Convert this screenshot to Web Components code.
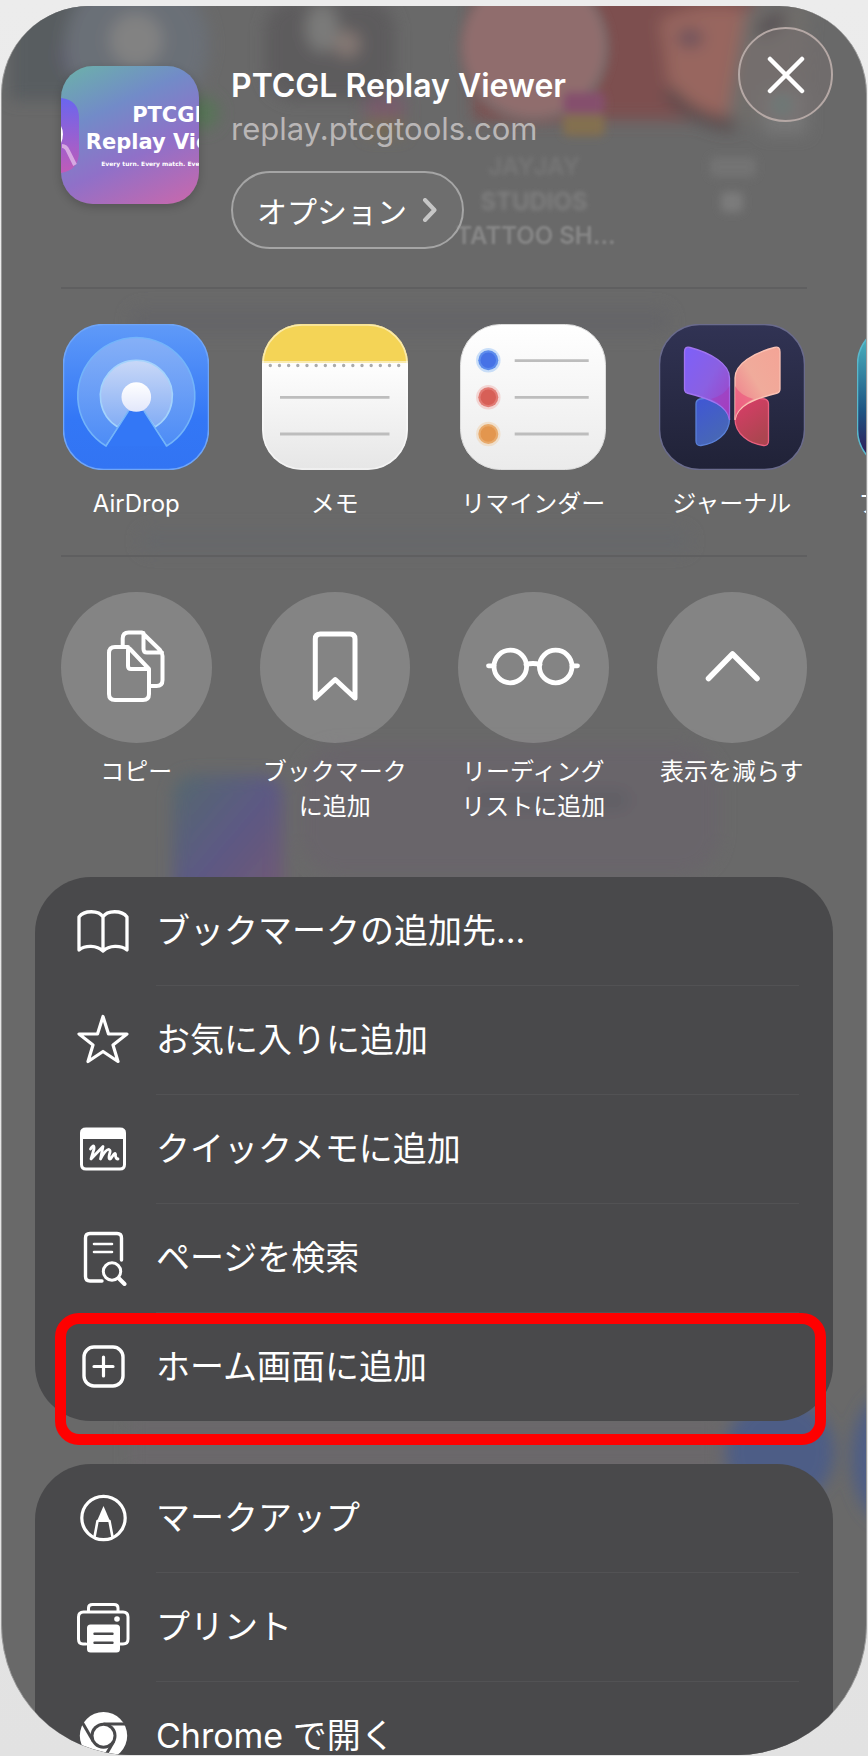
<!DOCTYPE html>
<html lang="ja">
<head>
<meta charset="UTF-8">
<meta name="viewport" content="width=device-width, initial-scale=1">
<title>PTCGL Replay Viewer</title>
<style>
    body {
        margin: 0;
        height: 100vh;
        overflow: hidden;
        background: linear-gradient(#ececec, #e2e2e2);
        color: #fff;
        font-family: Inter, "Noto Sans CJK JP", sans-serif;
    }
</style>
</head>
<body>
<share-sheet>
    <sheet-header slot="header" name="PTCGL Replay Viewer" site="replay.ptcgtools.com"></sheet-header>

    <tile-row slot="apps">
        <app-tile icon="airdrop">AirDrop</app-tile>
        <app-tile icon="notes">メモ</app-tile>
        <app-tile icon="reminders">リマインダー</app-tile>
        <app-tile icon="journal">ジャーナル</app-tile>
        <app-tile icon="board">フリーボード</app-tile>
    </tile-row>

    <tile-row slot="actions">
        <round-action icon="copy">コピー</round-action>
        <round-action icon="bookmark">ブックマーク<br>に追加</round-action>
        <round-action icon="glasses">リーディング<br>リストに追加</round-action>
        <round-action icon="up">表示を減らす</round-action>
    </tile-row>

    <menu-card>
        <menu-row icon="book">ブックマークの追加先...</menu-row>
        <menu-row icon="star">お気に入りに追加</menu-row>
        <menu-row icon="memo">クイックメモに追加</menu-row>
        <menu-row icon="find">ページを検索</menu-row>
        <menu-row icon="plus" marked>ホーム画面に追加</menu-row>
    </menu-card>
    <menu-card>
        <menu-row icon="markup">マークアップ</menu-row>
        <menu-row icon="print">プリント</menu-row>
        <menu-row icon="chrome">Chrome で開く</menu-row>
    </menu-card>
</share-sheet>

<script>
// 146 x 146 app icons
const APP_ICONS = {
    airdrop: `
        <defs>
            <linearGradient id="bg" x2="0" y2="1"><stop stop-color="#5f9af8"/><stop offset=".65" stop-color="#3377f6"/><stop offset="1" stop-color="#3274f3"/></linearGradient>
            <linearGradient id="o" x2="0" y2="1"><stop stop-color="#86b0f7"/><stop offset="1" stop-color="#4d8cf6"/></linearGradient>
            <linearGradient id="m" x2="0" y2="1"><stop stop-color="#c9d8f7"/><stop offset="1" stop-color="#83adf5"/></linearGradient>
            <linearGradient id="d" x2="0" y2="1"><stop stop-color="#fff"/><stop offset="1" stop-color="#e2e7fb"/></linearGradient>
        </defs>
        <rect x=".5" y=".5" width="145" height="145" rx="40" fill="url(#bg)" stroke="#6fa5f8" stroke-width="1.5"/>
        <path d="M43 122A58.5 58.5 0 1 1 103.6 122L81 88H65.5Z" fill="url(#o)" stroke="#73b4fa" stroke-width="1.6" stroke-linejoin="round"/>
        <path d="M54.7 103A36 36 0 1 1 92 103L81 88H65.5Z" fill="url(#m)" stroke="#a4d3fc" stroke-width="1.6" stroke-linejoin="round"/>
        <path d="M43.5 122L65.5 87H81L103 122Z" fill="#3377f6"/>
        <path d="M43 122L65.5 87M103.6 122L81 87" stroke="#73b4fa" stroke-width="1.4"/>
        <circle cx="73.3" cy="73" r="14.8" fill="url(#d)"/>`,
    notes: `
        <defs>
            <linearGradient id="bg" x2="0" y2="1"><stop offset=".3" stop-color="#fdfdfd"/><stop offset="1" stop-color="#e6e6e6"/></linearGradient>
            <clipPath id="c"><rect width="146" height="146" rx="40"/></clipPath>
        </defs>
        <g clip-path="url(#c)">
            <rect width="146" height="146" fill="url(#bg)"/>
            <rect width="146" height="37" fill="#f4d456"/>
            <path d="M0 38H146" stroke="#f9ebb0" stroke-width="2"/>
        </g>
        <rect x="1" y="1" width="144" height="144" rx="39" fill="none" stroke="#fff" stroke-opacity=".5" stroke-width="1.5"/>
        <path d="M8.3 41.5H138" stroke="#aaa" stroke-width="3.4" stroke-linecap="round" stroke-dasharray="0 9.17"/>
        <path d="M18 73.3H127.5M18 110H127.5" stroke="#bdbdbd" stroke-width="2.8"/>`,
    reminders: `
        <defs><linearGradient id="bg" x2="0" y2="1"><stop stop-color="#fff"/><stop offset="1" stop-color="#ebebeb"/></linearGradient></defs>
        <rect x=".5" y=".5" width="145" height="145" rx="40" fill="url(#bg)" stroke="#ddd" stroke-width="1"/>
        <g stroke-opacity=".4" stroke-width="4.5">
            <circle cx="28.3" cy="36.3" r="10" fill="#4672e6" stroke="#7fb4f5"/>
            <circle cx="28.3" cy="73.3" r="10" fill="#d75f57" stroke="#f0a5a0"/>
            <circle cx="28.3" cy="110" r="10" fill="#e3964e" stroke="#f0c898"/>
        </g>
        <path d="M54.7 36.6H128.7M54.7 73.3H128.7M54.7 110H128.7" stroke="#bdbdbd" stroke-width="2.8"/>`,
    journal: `
        <defs>
            <linearGradient id="bg" x2="0" y2="1"><stop stop-color="#313354"/><stop offset="1" stop-color="#202237"/></linearGradient>
            <linearGradient id="a" x2="1" y2="1"><stop stop-color="#7d60fa"/><stop offset=".5" stop-color="#8a60e2"/><stop offset="1" stop-color="#a23fc0"/></linearGradient>
            <linearGradient id="b" x2=".5" y2="1"><stop stop-color="#3f56d6"/><stop offset="1" stop-color="#4868b4"/></linearGradient>
            <linearGradient id="e" x1="1" x2="0" y2="1"><stop stop-color="#f4a496"/><stop offset=".5" stop-color="#f0ab9b"/><stop offset="1" stop-color="#ee7088"/></linearGradient>
            <linearGradient id="f" x2=".5" y2="1"><stop stop-color="#dd3c6a"/><stop offset="1" stop-color="#ac4550"/></linearGradient>
        </defs>
        <rect x=".5" y=".5" width="145" height="145" rx="40" fill="url(#bg)" stroke="#6a6b8c" stroke-width="1.5"/>
        <path d="M37 80Q37 76 41 75L49 74C60 76 70.5 84 70.5 95C70.5 110 56 120 42 121.500Q37 122 37 117Z" fill="url(#b)" stroke="#5a80d8" stroke-width="1.3"/>
        <path d="M25.5 28Q25.5 22 31 23.5C52 29 70.5 40 70.5 54V96C69 82 52 75 28 69Q25.5 68 25.5 65Z" fill="url(#a)" stroke="#a174f0" stroke-width="1.3"/>
        <path d="M52 75Q66 71 70.5 62V96C69 87 62 79 52 75Z" fill="#a838b8" opacity=".5"/>
        <path d="M109.5 80Q109.5 76 105.5 75L97.5 74C86.5 76 76 84 76 95C76 110 90.5 120 104.5 121.5Q109.5 122 109.5 117Z" fill="url(#f)" stroke="#ea6080" stroke-width="1.3"/>
        <path d="M121 28Q121 22 115.5 23.5C94.5 29 76 40 76 54V96C77.5 82 94.5 75 118.5 69Q121 68 121 65Z" fill="url(#e)" stroke="#fbc2b4" stroke-width="1.3"/>
        <path d="M94.5 75Q80.5 71 76 62V96C77.5 87 84.5 79 94.5 75Z" fill="#ec4478" opacity=".5"/>`,
    board: `
        <defs><linearGradient id="bg" x2="0" y2="1"><stop offset=".1" stop-color="#48afbd"/><stop offset=".6" stop-color="#1d5482"/><stop offset="1" stop-color="#35094a"/></linearGradient></defs>
        <rect x=".5" y=".5" width="145" height="145" rx="40" fill="url(#bg)" stroke="#59b8cc" stroke-width="1.5"/>`
};

// 96 x 96 line icons inside the round buttons
const ACTION_ICONS = {
    copy: `<g stroke-width="4"><path d="M40 28H27Q21 28 21 34V75Q21 81 27 81H55Q61 81 61 75V50L42 30Q40 28 40 31V47Q40 50 43 50H61"/>
        <path d="M34.7 27V19.5Q34.7 13.5 40.7 13.5H54L72 31Q74.5 34 74.5 37V61Q74.5 67 68.5 67H63M55.5 14V30Q55.5 33.5 59 33.5H74"/></g>`,
    bookmark: `<path stroke-width="5" d="M28.3 79V20Q28.3 15 33.3 15H63Q68 15 68 20V79L48.2 60.5Z"/>`,
    glasses: `<g stroke-width="4.8"><circle cx="25.3" cy="47.5" r="16.3"/><circle cx="70.7" cy="47.5" r="16.3"/><path d="M41 45.5Q48 43.5 55 45.5M3.5 46.8H9M87 46.8H92.5"/></g>`,
    up: `<path stroke-width="5.5" d="M24.5 59.5L48.5 35L73 59.5"/>`
};

// 56 x 56 menu icons
const MENU_ICONS = {
    book: `<path stroke-width="3.3" d="M28 14C24 7 9 7 4 14V47C10 42 22 42 28 48C34 42 46 42 52 47V14C47 7 32 7 28 14V48"/>`,
    star: `<path stroke-width="3.2" d="M28 4.5L33.5 22H52L38 33L43 49.5L28 39.5L13 49.5L18 33L4 22H22.5Z"/>`,
    memo: `<path stroke-width="3" d="M6.5 12Q6.5 8 11 8H45Q49.5 8 49.5 12V43.5Q49.5 48 45 48H11Q6.5 48 6.5 43.5Z"/>
        <path fill="#fff" stroke="none" d="M6 13Q6 7 12 7H44Q50 7 50 13V18H6Z"/>
        <path stroke-width="2.8" d="M15.5 28Q19.500 22 19 28L16 38L28 25.500L25.500 38Q31 28 34 28.500Q36 29 34.500 33Q33 38.500 35.500 38L39 33Q41 31.500 40.500 35Q41 38 43 38"/>`,
    find: `<path stroke-width="3.4" d="M27 51H15Q10.5 51 10.5 46.5V8Q10.5 3.5 15 3.5H42Q46.5 3.5 46.5 8V30"/>
        <path stroke-width="2.6" d="M19 14H37M19 22H37"/><circle cx="37" cy="41.5" r="8.7" stroke-width="3"/><path stroke-width="4" d="M44 48.5L49.5 54"/>`,
    plus: `<rect x="9" y="8" width="39" height="39" rx="10" stroke-width="3.4"/><path stroke-width="3.2" d="M19 27.5H38M28.5 18V37"/>`,
    markup: `<circle cx="28.5" cy="28" r="21.7" stroke-width="3.2"/><path stroke="none" fill="#fff" d="M28.5 16L35 31V32H22V31Z"/>
        <path stroke-width="2.6" d="M22.5 31L19.5 47M34.5 31L37.5 47"/>`,
    print: `<path stroke-width="3" d="M11 45H8Q3.5 45 3.5 40V18Q3.5 13 8.5 13H48Q53 13 53 18V40Q53 45 48 45H45M13.5 12V9Q13.5 5.5 17.5 5.5H39Q43 5.5 43 9V12"/>
        <rect x="12" y="25.5" width="33" height="28" rx="3.5" fill="#fff" stroke="none"/><circle cx="42" cy="20" r="2.8" fill="#fff" stroke="none"/>
        <path stroke="#49494b" stroke-width="2.4" d="M19.5 34.7H37.5M19.5 43.7H37.5"/>`,
    chrome: `<circle cx="28.5" cy="27.7" r="23.7" fill="#fff" stroke="none"/><circle cx="28.5" cy="27.7" r="13" fill="#49494b" stroke="none"/>
        <g stroke="#49494b" stroke-width="3" stroke-linecap="butt"><path d="M28.5 16H54"/><path d="M28.5 16H54" transform="rotate(120 28.5 27.7)"/><path d="M28.5 16H54" transform="rotate(240 28.5 27.7)"/></g>
        <circle cx="28.5" cy="27.7" r="10" fill="#fff" stroke="none"/>`
};

function lineIcon(body, size) {
    return `<svg viewBox="0 0 ${size} ${size}" width="${size}" height="${size}" fill="none" stroke="#fff" stroke-linecap="round" stroke-linejoin="round" aria-hidden="true">${body}</svg>`;
}

const BUTTON_RESET = `
    button {
        margin: 0; padding: 0; border: 0; background: none;
        color: inherit; font: inherit; cursor: pointer;
    }
    svg { display: block; }
`;

class SheetBackdrop extends HTMLElement {
    constructor() {
        super();
        this.attachShadow({ mode: 'open' });
        this.shadowRoot.innerHTML = `
            <style>
                :host { display: block; position: absolute; inset: 0; z-index: -1; }
                svg { display: block; width: 100%; }
                text { font: 600 24px Inter, sans-serif; fill: #8b8b8b; text-anchor: middle; }
            </style>
            <svg viewBox="2 6 864 1749" aria-hidden="true">
                <defs>
                    <filter id="soft" x="-20%" y="-20%" width="140%" height="140%"><feGaussianBlur stdDeviation="8"/></filter>
                    <filter id="haze" x="-20%" y="-20%" width="140%" height="140%"><feGaussianBlur stdDeviation="4"/></filter>
                    <filter id="letters" x="-20%" y="-20%" width="140%" height="140%"><feGaussianBlur stdDeviation="2"/></filter>
                    <linearGradient id="tile" x2="1" y2="1"><stop stop-color="#55696d"/><stop offset=".5" stop-color="#5c5984"/><stop offset="1" stop-color="#745a72"/></linearGradient>
                </defs>
                <g filter="url(#soft)">
                    <rect x="10" y="-20" width="90" height="120" fill="#585d61"/>
                    <circle cx="85" cy="55" r="24" fill="#5e5874"/>
                    <circle cx="137" cy="45" r="72" fill="#6b7077"/>
                    <circle cx="136" cy="40" r="27" fill="#828282"/>
                    <circle cx="203" cy="113" r="16" fill="#577557"/>
                    <rect x="265" y="0" width="130" height="100" rx="30" fill="#5d5c5d"/>
                    <ellipse cx="322" cy="28" rx="16" ry="24" fill="#7c7b7a"/>
                    <circle cx="347" cy="44" r="13" fill="#867974"/>
                    <rect x="366" y="98" width="38" height="18" fill="#7a596d"/>
                    <rect x="366" y="118" width="38" height="18" fill="#776b55"/>
                    <rect x="474" y="-20" width="280" height="140" fill="#7d5050"/>
                    <path d="M660 20Q700 0 750 10L770 120L720 125L670 90Z" fill="#98665f"/>
                    <ellipse cx="690" cy="38" rx="13" ry="9" fill="#68505b"/>
                    <path d="M745 10L810 0L800 120L725 125Z" fill="#706d6b"/>
                    <path d="M668 90Q690 120 735 125" stroke="#55494b" stroke-width="12" fill="none"/>
                    <path d="M760 35Q770 20 785 20" stroke="#575052" stroke-width="16" fill="none"/>
                    <rect x="763" y="90" width="44" height="44" fill="#777"/>
                    <rect x="173" y="775" width="110" height="130" rx="20" fill="url(#tile)"/>
                    <rect x="300" y="745" width="420" height="130" rx="40" fill="#69656a"/>
                    <rect x="470" y="790" width="160" height="20" rx="10" fill="#605f65"/>
                    <rect x="130" y="1420" width="590" height="50" fill="#6b676a"/>
                    <circle cx="780" cy="1452" r="54" fill="#4d5d86"/>
                    <ellipse cx="888" cy="1458" rx="36" ry="64" fill="#4d5d86"/>
                    <rect x="130" y="308" width="540" height="26" rx="12" fill="#656567"/>
                    <rect x="140" y="530" width="550" height="22" rx="11" fill="#66676a"/>
                </g>
                <g filter="url(#haze)">
                    <circle cx="534" cy="48" r="76" fill="#7c6868"/>
                    <circle cx="534" cy="46" r="69" fill="#906d6d"/>
                    <rect x="563" y="92" width="42" height="22" rx="6" fill="#85506d"/>
                    <rect x="563" y="114" width="42" height="22" rx="6" fill="#837050"/>
                    <circle cx="782" cy="105" r="11" fill="#687f7c"/>
                    <rect x="710" y="157" width="46" height="20" rx="5" fill="#737373"/>
                    <rect x="721" y="192" width="22" height="20" rx="5" fill="#7b7b7b"/>
                </g>
                <g filter="url(#letters)">
                    <text x="534" y="175" opacity=".4">JAYJAY</text>
                    <text x="534" y="210" opacity=".7">STUDIOS</text>
                </g>
                <text x="536" y="244" opacity=".9" style="filter: blur(1px)">TATTOO SH...</text>
            </svg>
        `;
    }
}
customElements.define('sheet-backdrop', SheetBackdrop);

class ShareSheet extends HTMLElement {
    constructor() {
        super();
        this.attachShadow({ mode: 'open' });
        this.shadowRoot.innerHTML = `
            <style>
                :host { display: block; box-sizing: border-box; height: 100vh; padding: 6px 1px 1px; }
                .sheet {
                    position: relative; isolation: isolate;
                    box-sizing: border-box; height: 100%; overflow: hidden;
                    border: 1px solid #999; border-width: 0 1px;
                    border-radius: 88px 88px 130px 130px;
                    background: #696969;
                }
                .strip { margin: 0 59px; padding: 35px 0 34px; border-top: 2px solid #5f5f60; }
                .cards { display: flex; flex-direction: column; gap: 43px; margin: 19px 33px 0; }
            </style>
            <section class="sheet">
                <sheet-backdrop></sheet-backdrop>
                <slot name="header"></slot>
                <div class="strip"><slot name="apps"></slot></div>
                <div class="strip"><slot name="actions"></slot></div>
                <div class="cards"><slot></slot></div>
            </section>
        `;
    }
}
customElements.define('share-sheet', ShareSheet);

class SheetHeader extends HTMLElement {
    constructor() {
        super();
        this.attachShadow({ mode: 'open' });
        this.shadowRoot.innerHTML = `
            <style>
                ${BUTTON_RESET}
                :host { display: flex; align-items: flex-start; padding: 21px 33px 38px 59px; }
                .thumb {
                    flex: none; width: 138px; height: 138px; margin-top: 39px;
                    display: grid; grid-template-columns: 218px; align-content: start;
                    padding-top: 36px; box-sizing: border-box; overflow: hidden;
                    position: relative; border-radius: 32px;
                    background: linear-gradient(155deg, #6cb0aa 2%, #728bc8 32%, #9070c8 62%, #c868ac 98%);
                    box-shadow: 0 3px 10px rgba(0,0,0,.2);
                    font: bold 21px/27px "DejaVu Sans", sans-serif; text-align: center;
                }
                .thumb svg { position: absolute; left: 0; top: 32px; }
                .thumb small { font-size: 6px; line-height: 16px; }
                .info { flex: 1; margin: 37px 0 0 32px; min-width: 0; }
                h1 { margin: 0; font-size: 32px; line-height: 43px; font-weight: 600; white-space: nowrap; }
                p { margin: 0 0 21px; font-size: 31px; line-height: 43px; color: #b9b6b6; }
                .options {
                    display: flex; align-items: center; gap: 15px;
                    height: 78px; padding: 0 25px 0 24px; box-sizing: border-box;
                    border: 2px solid #a5a5a5; border-radius: 39px;
                    background: rgba(255,255,255,.04); font-size: 30px;
                }
                .close {
                    flex: none; display: grid; place-items: center;
                    width: 95px; height: 95px; box-sizing: border-box;
                    border: 2px solid #b5a8a5; border-radius: 50%;
                    background: rgba(120,112,112,.5);
                }
            </style>
            <div class="thumb">
                <svg width="20" height="76" viewBox="0 0 20 76" aria-hidden="true">
                    <defs><linearGradient id="g" x2="0" y2="1"><stop stop-color="#6a66ee"/><stop offset="1" stop-color="#c05bb8"/></linearGradient></defs>
                    <path d="M0 0Q18 2 18 20V54Q18 72 0 75Z" fill="url(#g)"/>
                    <path d="M0 28Q4 36 0 45Z" fill="#fff"/>
                    <path d="M1 48Q5 48 7 53L14 67" stroke="#d6a8e2" stroke-width="4" fill="none"/>
                </svg>
                <span>PTCGL</span>
                <span>Replay Viewer</span>
                <small>Every turn. Every match. Every decision.</small>
            </div>
            <div class="info">
                <h1>${this.getAttribute('name')}</h1>
                <p>${this.getAttribute('site')}</p>
                <button class="options" type="button">オプション
                    <svg width="15" height="24" viewBox="0 0 15 24" fill="none" stroke="#c6c6c6" stroke-width="4" stroke-linecap="round" stroke-linejoin="round" aria-hidden="true"><path d="M3 2L12.5 12L3 22"/></svg>
                </button>
            </div>
            <button class="close" type="button" aria-label="閉じる">
                <svg width="38" height="38" viewBox="0 0 38 38" stroke="#fff" stroke-width="4.5" stroke-linecap="round" aria-hidden="true"><path d="M3 3L35 35M35 3L3 35"/></svg>
            </button>
        `;
    }
}
customElements.define('sheet-header', SheetHeader);

class TileRow extends HTMLElement {
    constructor() {
        super();
        this.attachShadow({ mode: 'open' });
        // four tiles fill the row, any others run off the right edge
        this.shadowRoot.innerHTML = `
            <style>
                :host {
                    display: grid; grid-auto-flow: column;
                    grid-auto-columns: calc((100% - 144px) / 4); column-gap: 48px;
                    font-size: 24px; line-height: 35px; text-align: center; white-space: nowrap;
                }
            </style>
            <slot></slot>
        `;
    }
}
customElements.define('tile-row', TileRow);

class AppTile extends HTMLElement {
    constructor() {
        super();
        this.attachShadow({ mode: 'open' });
        this.shadowRoot.innerHTML = `
            <style>
                ${BUTTON_RESET}
                :host { display: block; }
                button { display: flex; flex-direction: column; align-items: center; gap: 16px; width: 100%; }
            </style>
            <button type="button">
                <svg width="146" height="146" viewBox="0 0 146 146" aria-hidden="true">${APP_ICONS[this.getAttribute('icon')]}</svg>
                <span><slot></slot></span>
            </button>
        `;
    }
}
customElements.define('app-tile', AppTile);

class RoundAction extends HTMLElement {
    constructor() {
        super();
        this.attachShadow({ mode: 'open' });
        this.shadowRoot.innerHTML = `
            <style>
                ${BUTTON_RESET}
                :host { display: block; }
                button { display: flex; flex-direction: column; align-items: center; gap: 11px; width: 100%; }
                .disc {
                    display: grid; place-items: center; width: 100%; aspect-ratio: 1;
                    border-radius: 50%; background: rgba(255,255,255,.18);
                }
            </style>
            <button type="button">
                <span class="disc">${lineIcon(ACTION_ICONS[this.getAttribute('icon')], 96)}</span>
                <span><slot></slot></span>
            </button>
        `;
    }
}
customElements.define('round-action', RoundAction);

class MenuCard extends HTMLElement {
    constructor() {
        super();
        this.attachShadow({ mode: 'open' });
        this.shadowRoot.innerHTML = `
            <style>
                :host { display: block; border-radius: 56px; background: #49494b; }
                ::slotted(menu-row:last-child) { --line: 0; }
            </style>
            <slot></slot>
        `;
    }
}
customElements.define('menu-card', MenuCard);

class MenuRow extends HTMLElement {
    constructor() {
        super();
        this.attachShadow({ mode: 'open' });
        this.shadowRoot.innerHTML = `
            <style>
                ${BUTTON_RESET}
                :host { display: block; position: relative; }
                button { display: flex; align-items: center; width: 100%; padding: 0 34px 0 40px; text-align: left; }
                .label {
                    flex: 1; margin-left: 25px;
                    border-bottom: var(--line, 1px) solid #525254;
                    font-size: 34px; line-height: 108px; white-space: nowrap;
                }
                /* red frame round the row to tap */
                :host([marked])::after {
                    content: ""; position: absolute; inset: 0 7px -24px 20px; z-index: 1;
                    border: 11px solid #f00; border-radius: 24px; pointer-events: none;
                }
            </style>
            <button type="button">
                ${lineIcon(MENU_ICONS[this.getAttribute('icon')], 56)}
                <span class="label"><slot></slot></span>
            </button>
        `;
    }
}
customElements.define('menu-row', MenuRow);
</script>
</body>
</html>
